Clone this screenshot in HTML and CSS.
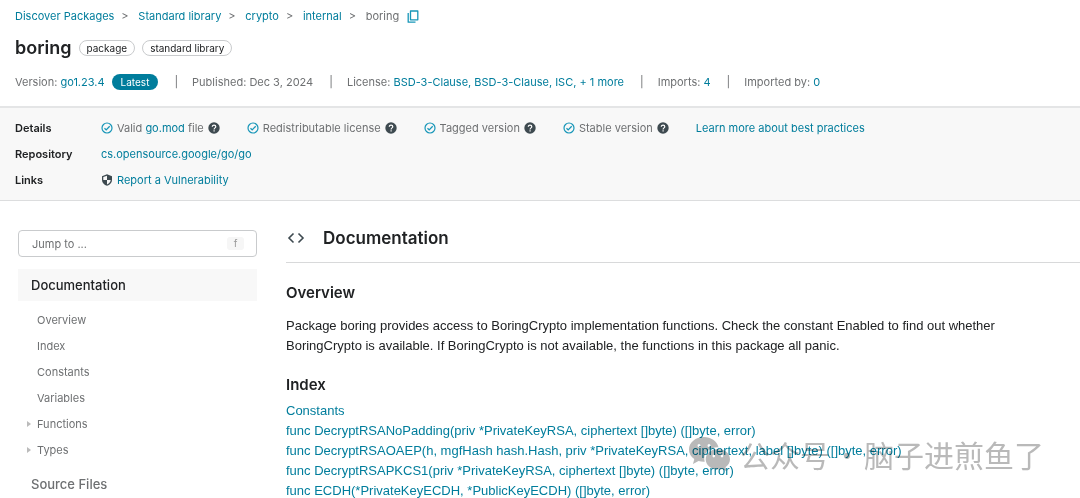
FILE: index.html
```html
<!DOCTYPE html>
<html lang="en">
<head>
<meta charset="utf-8">
<title>boring package - Go Packages</title>
<link rel="stylesheet" href="styles.css">
</head>
<body>
<svg class="defs" aria-hidden="true">
  <symbol id="check" viewBox="0 0 12 12"><circle cx="6" cy="6" r="5" fill="none" stroke="currentColor" stroke-width="1.2"/><path d="M3.500 6.200 5.200 7.900 8.700 4.200" fill="none" stroke="currentColor" stroke-width="1.3"/></symbol>
  <symbol id="help" viewBox="0 0 12 12"><circle cx="6" cy="6" r="5.700" fill="currentColor"/><path d="M4.300 4.800C4.300 2.600 7.800 2.700 7.800 4.700 7.800 5.900 6.100 5.900 6.100 7.400M6.100 8.200V9.400" fill="none" stroke="#fff" stroke-width="1.2"/></symbol>
</svg>
<header class="header">
  <nav class="crumbs" aria-label="Breadcrumb">
    <a href="#">Discover Packages</a><span class="sep">&gt;</span>
    <a href="#">Standard library</a><span class="sep">&gt;</span>
    <a href="#">crypto</a><span class="sep">&gt;</span>
    <a href="#">internal</a><span class="sep">&gt;</span>
    <span>boring</span>
    <button class="copy" type="button" aria-label="Copy path"><svg viewBox="0 0 12 13" width="12" height="13"><path d="M3.500 1H10.800V9.800H3.500ZM1.200 3V12.200H8.500" fill="none" stroke="currentColor" stroke-width="1.3" stroke-linejoin="round"/></svg></button>
  </nav>
  <div class="title">
    <h1>boring</h1>
    <span class="chip">package</span>
    <span class="chip">standard library</span>
  </div>
  <div class="meta">
    <span class="version">Version: <a href="#">go1.23.4</a></span>
    <span class="latest">Latest</span>
    <span class="bar">|</span>
    <span>Published: Dec 3, 2024</span>
    <span class="bar">|</span>
    <span>License: <a href="#">BSD-3-Clause, BSD-3-Clause, ISC, + 1 more</a></span>
    <span class="bar">|</span>
    <span>Imports: <a href="#">4</a></span>
    <span class="bar">|</span>
    <span>Imported by: <a href="#">0</a></span>
  </div>
</header>
<section class="details">
  <h2>Details</h2>
  <ul class="checks">
    <li><svg class="ok"><use href="#check"/></svg><span>Valid <a href="#">go.mod</a> file</span><svg class="help"><use href="#help"/></svg></li>
    <li><svg class="ok"><use href="#check"/></svg><span>Redistributable license</span><svg class="help"><use href="#help"/></svg></li>
    <li><svg class="ok"><use href="#check"/></svg><span>Tagged version</span><svg class="help"><use href="#help"/></svg></li>
    <li><svg class="ok"><use href="#check"/></svg><span>Stable version</span><svg class="help"><use href="#help"/></svg></li>
    <li><a href="#">Learn more about best practices</a></li>
  </ul>
  <h2>Repository</h2>
  <div><a href="#">cs.opensource.google/go/go</a></div>
  <h2>Links</h2>
  <div class="report"><svg class="shield" viewBox="0 0 12 12"><path d="M6 .3 11 2.200V6C11 8.600 8.900 11 6 11.800 3.100 11 1 8.600 1 6V2.200Z" fill="currentColor"/><path d="M6 1.700V6H2.300V3.100ZM6 6H9.700C9.500 8.200 7.900 9.800 6 10.500Z" fill="#f8f8f8"/></svg><a href="#">Report a Vulnerability</a></div>
</section>
<div class="body">
  <aside class="side">
    <label class="jump"><input type="text" placeholder="Jump to ..." aria-label="Jump to"><kbd>f</kbd></label>
    <nav class="tree" aria-label="Outline">
      <a class="top current" href="#">Documentation</a>
      <a href="#">Overview</a>
      <a href="#">Index</a>
      <a href="#">Constants</a>
      <a href="#">Variables</a>
      <a class="branch" href="#">Functions</a>
      <a class="branch" href="#">Types</a>
      <a class="top" href="#">Source Files</a>
    </nav>
  </aside>
  <main class="doc">
    <h2 class="doc-title"><svg viewBox="0 0 20 12" width="20" height="12"><path d="M7.500 1.500 3 6 7.500 10.500M12.500 1.500 17 6 12.500 10.500" fill="none" stroke="currentColor" stroke-width="1.6"/></svg>Documentation</h2>
    <h3>Overview</h3>
    <p>Package boring provides access to BoringCrypto implementation functions. Check the constant Enabled to find out whether BoringCrypto is available. If BoringCrypto is not available, the functions in this package all panic.</p>
    <h3>Index</h3>
    <ul class="index">
      <li><a href="#">Constants</a></li>
      <li><a href="#">func DecryptRSANoPadding(priv *PrivateKeyRSA, ciphertext []byte) ([]byte, error)</a></li>
      <li><a href="#">func DecryptRSAOAEP(h, mgfHash hash.Hash, priv *PrivateKeyRSA, ciphertext, label []byte) ([]byte, error)</a></li>
      <li><a href="#">func DecryptRSAPKCS1(priv *PrivateKeyRSA, ciphertext []byte) ([]byte, error)</a></li>
      <li><a href="#">func ECDH(*PrivateKeyECDH, *PublicKeyECDH) ([]byte, error)</a></li>
    </ul>
  </main>
</div>
<div class="watermark" lang="zh">
  <svg viewBox="0 0 42 36" width="42" height="36"><path fill="currentColor" fill-rule="evenodd" d="M16 1C7.500 1 1 6.500 1 13.500c0 4 2 7.300 5.300 9.600L5 28l5.500-3c2 .6 4 .9 6.200.8C14.500 17.500 21 11 30.500 11.200 29 5.200 23 1 16 1ZM11 8a1.500 1.500 0 1 1 0 3 1.500 1.500 0 0 1 0-3Zm10 0a1.500 1.500 0 1 1 0 3 1.500 1.500 0 0 1 0-3Z"/><path fill="currentColor" fill-rule="evenodd" d="M30 13c-7 0-12.300 4.600-12.300 10.300S23 33.500 30 33.500c1.500 0 3-.2 4.300-.6l4.200 2.400-1-4c2.800-2 4.500-4.800 4.500-8C42 17.600 37 13 30 13Zm-4.200 5.800a1.300 1.300 0 1 1 0 2.600 1.300 1.300 0 0 1 0-2.600Zm8.200 0a1.300 1.300 0 1 1 0 2.600 1.300 1.300 0 0 1 0-2.600Z"/></svg>
  <span class="account">公众号<span class="dot">·</span>脑子进煎鱼了</span>
</div>
</body>
</html>
```
FILE: styles.css
```css
* { box-sizing: border-box; }
body {
  margin: 0;
  background: #fff;
  color: #6e7072;
  font: 11px/20px Inter, "Noto Sans CJK SC", sans-serif;
  position: relative;
  overflow: hidden;
}
h1, h2, h3, p, ul { margin: 0; padding: 0; }
h1, h2, h3 { color: #202224; font-weight: 600; }
ul { list-style: none; }
a { color: #007d9c; text-decoration: none; }
.defs { position: absolute; width: 0; height: 0; }

.header { padding: 6px 15px 14px; border-bottom: 2px solid #e4e5e6; }
.crumbs { display: flex; align-items: center; }
.sep { width: 24px; padding-left: 7px; }
.copy { display: flex; margin-left: 8px; padding: 0; border: 0; background: none; color: #1796b8; }
.title { display: flex; align-items: center; gap: 7px; margin-top: 9px; height: 26px; }
.title h1 { font-size: 18px; line-height: 26px; }
.chip { border: 1px solid #c9cbcd; border-radius: 8px; padding: 0 7px; font-size: 10px; line-height: 14px; color: #202224; }
.meta { display: flex; align-items: center; margin-top: 11px; }
.latest { margin-left: 7px; padding: 0 9px; border-radius: 8px; background: #007d9c; color: #fff; font-size: 10px; line-height: 16px; }
.bar { padding: 0 14px 0 16px; }

.details {
  display: grid;
  grid-template-columns: 86px 1fr;
  row-gap: 6px;
  padding: 10px 15px;
  background: #f8f8f8;
  border-bottom: 1px solid #dcddde;
}
.details h2 { font-size: 11px; line-height: 20px; }
.checks { display: flex; gap: 27px; }
.checks li, .report { display: flex; align-items: center; gap: 4px; }
.ok, .help, .shield { width: 12px; height: 12px; flex: none; }
.ok { color: #1796b8; }
.help, .shield { color: #3e4a50; }

.body { display: grid; grid-template-columns: 239px 1fr; gap: 29px; padding-left: 18px; }
.side { padding-top: 29px; }
.jump { display: flex; align-items: center; height: 27px; padding: 0 12px 0 13px; border: 1px solid #c9cbcd; border-radius: 4px; }
.jump input { flex: 1; min-width: 0; padding: 0; border: 0; outline: 0; background: none; color: #6e7072; font: inherit; }
.jump input::placeholder { color: #6e7072; opacity: 1; }
.jump kbd { width: 17px; border-radius: 3px; background: #f6f6f6; color: #999; font: 10px/13px Inter, sans-serif; text-align: center; }
.tree { display: flex; flex-direction: column; margin-top: 12px; }
.tree a { position: relative; padding-left: 19px; line-height: 26px; color: #6e7072; }
.tree .top { margin-top: 5px; padding-left: 13px; font-size: 13px; line-height: 32px; font-weight: 500; }
.tree .current { margin: 0 0 6px; background: #f8f8f8; color: #202224; }
.branch::before { content: ""; position: absolute; left: 9px; top: 10px; border: solid transparent; border-width: 3px 0 3px 4px; border-left-color: #bbb; }

.doc-title { display: flex; align-items: center; gap: 17px; height: 62px; padding-top: 13px; border-bottom: 1px solid #d8d9da; font-size: 17px; }
.doc-title svg { color: #3e4a50; }
.doc h3 { font-size: 15px; line-height: 22px; margin-top: 19px; }
.doc p { margin: 12px 50px 0 0; font: 13px/20px "Liberation Sans", sans-serif; color: #202224; }
.doc p + h3 { margin-top: 18px; }
.index { margin-top: 5px; font: 13px/20px "Liberation Sans", sans-serif; }

.watermark { position: absolute; left: 688px; top: 434px; display: flex; align-items: center; gap: 10px; color: #b9b9b9; mix-blend-mode: multiply; font: 30px/40px "Noto Sans CJK SC", sans-serif; white-space: nowrap; pointer-events: none; }
.account { display: flex; }
.dot { width: 34px; text-align: center; }
```
